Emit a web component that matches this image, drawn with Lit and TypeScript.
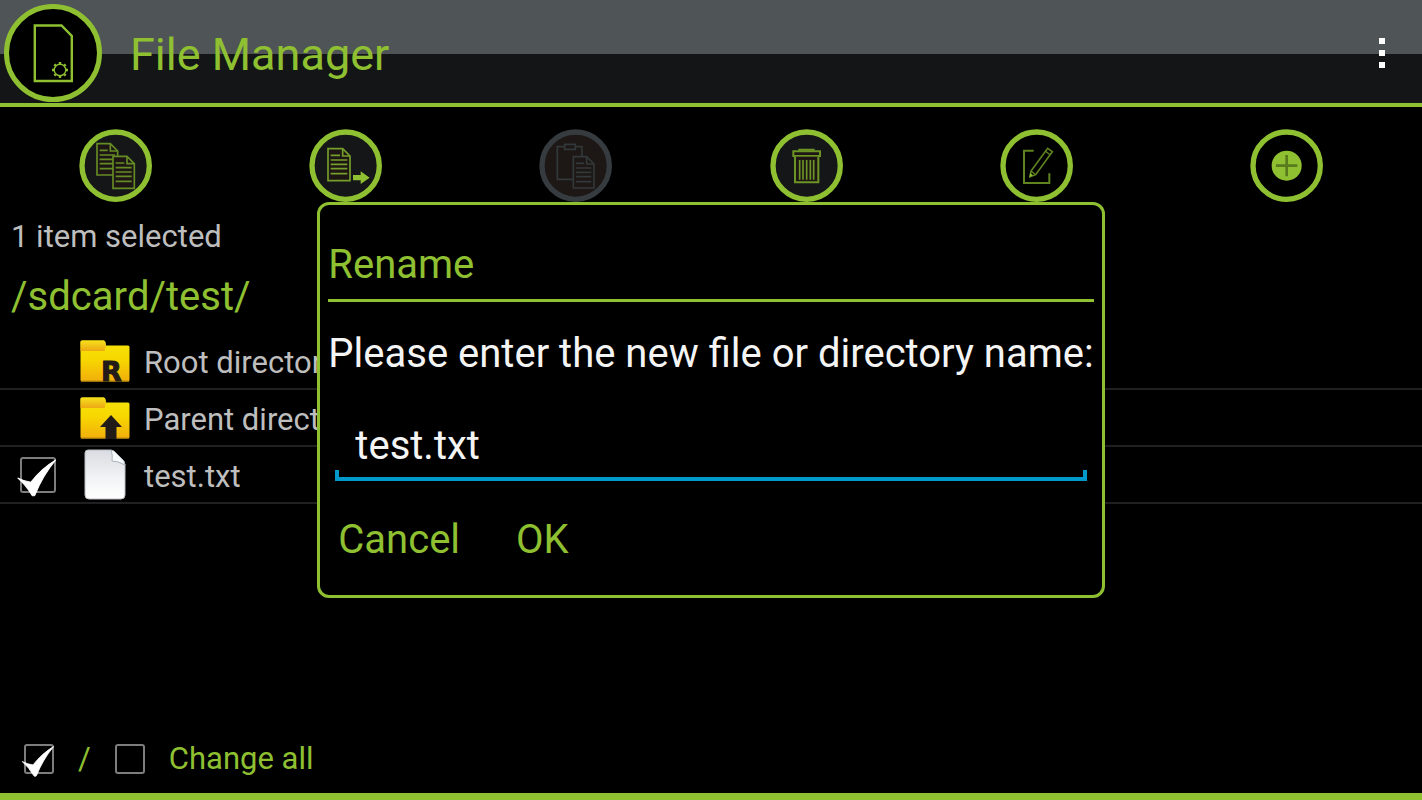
import { LitElement, html, svg, css, nothing, TemplateResult } from "lit";
import { customElement, state } from "lit/decorators.js";

const folder = (mark: TemplateResult) => html`
  <svg class="icon" width="50" height="42" viewBox="0 0 50 42" aria-hidden="true">
    <defs>
      <linearGradient id="body" x1="0" y1="0" x2="0" y2="1">
        <stop offset="0" stop-color="#f6e30a" />
        <stop offset="0.45" stop-color="#f7d800" />
        <stop offset="1" stop-color="#f2ae0c" />
      </linearGradient>
      <linearGradient id="tab" x1="0" y1="0" x2="0" y2="1">
        <stop offset="0" stop-color="#f6e01c" />
        <stop offset="1" stop-color="#eea814" />
      </linearGradient>
    </defs>
    <path d="M0.5 2Q0.5 0.5 2 0.5H23.5Q25 0.5 25.3 2L26 5.5H48Q49.5 5.5 49.5 7V40Q49.5 41.5 48 41.5H2Q0.5 41.5 0.5 40Z" fill="url(#body)" />
    <path d="M0.5 2Q0.5 0.5 2 0.5H23.5Q25 0.5 25.3 2L26 5.5L24.5 11H0.5Z" fill="url(#tab)" />
    <path d="M1 41H49" stroke="#b98a10" stroke-width="1" />
    ${mark}
  </svg>
`;

const rootFolder = () =>
  folder(svg`<text x="21" y="41" font-family="DejaVu Sans, sans-serif" font-weight="bold" font-size="27" fill="#231b18" stroke="#231b18" stroke-width="1">R</text>`);

const parentFolder = () => folder(svg`<path d="M31 18L42 30H36.5V42H25.5V30H20Z" fill="#231b18" />`);

const fileIcon = () => html`
  <svg class="icon" width="42" height="51" viewBox="0 0 42 51" aria-hidden="true">
    <defs>
      <linearGradient id="paper" x1="0" y1="0" x2="0" y2="1">
        <stop offset="0" stop-color="#d9dce1" />
        <stop offset="0.6" stop-color="#f3f4f6" />
        <stop offset="1" stop-color="#ffffff" />
      </linearGradient>
    </defs>
    <path d="M4 1H27L41 15V46Q41 50 37 50H5Q1 50 1 46V4Q1 1 4 1Z" fill="url(#paper)" stroke="#b9bdc2" stroke-width="1" />
    <path d="M27 1Q29 6 28 12Q34 12 41 16L40 12L30 2Z" fill="#f7f9fa" stroke="#a9b3bc" stroke-width="1" />
  </svg>
`;

const sheet = (x: number, y: number, w: number, h: number, paper: string) => svg`
  <g transform="translate(${x} ${y})">
    <path d="M0 0H${w - 22}L${w} 22V${h}H0Z" fill=${paper} />
    <path d="M${w - 22} 0V22H${w}" />
    <path d="M8 20H${w - 30}M8 34H${w - 8}M8 47H${w - 8}M8 60H${w - 8}M8 75H${w - 8}" />
  </g>
`;

interface Action {
  name: string;
  ring: string;
  face: string;
  ink: string;
  disabled?: boolean;
  art: TemplateResult;
}

const GREEN = "#8fc031";

const actions: Action[] = [
  {
    name: "Copy", ring: GREEN, face: "#141618", ink: "#658c24",
    art: svg`${sheet(81, 71, 62, 94, "#1e1614")}${sheet(129, 109, 64, 96, "#1e1614")}`,
  },
  {
    name: "Move", ring: GREEN, face: "#141618", ink: "#759e2a",
    art: svg`${sheet(84, 86, 66, 96, "#1e1614")}<path d="M159 165H182V154L209 173L182 192V181H159Z" fill="#8fc031" stroke="none" />`,
  },
  {
    name: "Paste", ring: "#353b3f", face: "#1d1715", ink: "#33383a", disabled: true,
    art: svg`<path d="M104 80H82V178H130M135 80H156V108" /><path d="M104 73H136V88H104Z" />${sheet(130, 110, 62, 94, "#1d1715")}`,
  },
  {
    name: "Delete", ring: GREEN, face: "#141618", ink: "#6d9526",
    art: svg`
      <g stroke-width="6">
        <path d="M97 94H177V108H97Z" fill="#1e1614" />
        <path d="M115 92V89H158V92" />
        <path d="M102 110V187H172V110" fill="#1e1614" />
        <path d="M116 120V179M126 120V179M137 120V179M148 120V179M158 120V179" stroke-width="5" />
      </g>`,
  },
  {
    name: "Rename", ring: GREEN, face: "#000000", ink: "#5f8420",
    art: svg`
      <g stroke-width="6">
        <path d="M128 92H99V189H175V160" />
        <path d="M170 85L184 95L134 164L117 170L120 153Z" stroke-width="5" />
        <path d="M120 153L134 164M163 93L177 104" stroke-width="4" />
        <path d="M118 160L126 166L115 171Z" fill="#8fc031" stroke="none" />
      </g>`,
  },
  {
    name: "Add", ring: GREEN, face: "#000000", ink: "#587b1e",
    art: svg`<circle cx="137" cy="137" r="45" fill="#8fc031" stroke="none" /><path d="M105 137H169M137 105V169" stroke-width="8" />`,
  },
];

@customElement("tick-box")
export class TickBox extends LitElement {
  static properties = {
    checked: { type: Boolean },
    label: { type: String },
  };
  declare checked: boolean;
  declare label: string;

  constructor() {
    super();
    this.checked = false;
    this.label = "";
  }

  static styles = css`
    :host { display: block; }
    .wrap { display: grid; width: var(--box, 30px); height: var(--box, 30px); }
    .box {
      grid-area: 1 / 1;
      appearance: none;
      box-sizing: border-box;
      width: 100%;
      height: 100%;
      margin: 0;
      border: 2px solid #7d7d7d;
      border-radius: 3px;
      background: #000;
    }
    .tick { grid-area: 1 / 1; width: 100%; height: 100%; overflow: visible; pointer-events: none; }
    .box:not(:checked) + .tick { display: none; }
  `;

  render() {
    return html`
      <label class="wrap">
        <input
          class="box"
          type="checkbox"
          aria-label=${this.label}
          .checked=${this.checked}
          @change=${(e: Event) => (this.checked = (e.target as HTMLInputElement).checked)}
        />
        <svg class="tick" viewBox="0 0 35 35" aria-hidden="true">
          <path d="M-2 20.5Q4 23.5 10.5 24.5Q21 11 34.5 3Q22 18 14.5 37Q13 38.5 11.5 37Q6 27.5 -2 20.5Z" fill="#ffffff" stroke="#ffffff" stroke-width="1" stroke-linejoin="round" />
        </svg>
      </label>
    `;
  }
}

@customElement("app-root")
export class AppRoot extends LitElement {
  @state() private fileName = "test.txt";
  @state() private dialogOpen = true;

  static styles = css`
    :host {
      --green: #8fc031;
      display: block;
      font-family: Roboto, "Noto Sans", sans-serif;
      color: #bebebe;
    }
    button { font: inherit; color: inherit; background: none; border: 0; padding: 0; margin: 0; cursor: pointer; }
    .page {
      box-sizing: border-box;
      min-height: 100vh;
      display: flex;
      flex-direction: column;
      background: #000;
      border-bottom: 7px solid var(--green);
    }
    .header {
      display: flex;
      align-items: center;
      gap: 28px;
      padding: 4px 24px 1px 4px;
      border-bottom: 4px solid var(--green);
      background: linear-gradient(#4f5457 54px, #141517 54px);
    }
    .logo { display: block; flex: none; }
    .title { flex: 1; margin: 0; padding-top: 4px; font-size: 45px; line-height: 56px; font-weight: 400; color: var(--green); }
    .menu { display: flex; flex-direction: column; align-items: center; gap: 6px; width: 32px; }
    .dot { width: 6px; height: 6px; background: #fff; }

    .toolbar { display: grid; grid-template-columns: repeat(5, 1fr) 270px; justify-items: center; padding: 22px 0 15px; }
    .action { display: block; border-radius: 50%; }
    .action:disabled { cursor: default; }
    .glyph { display: block; }

    .status { padding-left: 11px; font-size: 31px; line-height: 40px; }
    .path { margin: 0; padding: 16px 11px 12px; font-size: 40px; line-height: 48px; font-weight: 400; font-kerning: none; color: var(--green); }

    .list { list-style: none; margin: 0; padding: 0; }
    .row {
      box-sizing: border-box;
      display: grid;
      grid-template-columns: 60px 50px 1fr;
      align-items: center;
      height: 57px;
      padding-left: 20px;
      border-bottom: 2px solid #202020;
    }
    .select { --box: 36px; }
    .icon { display: block; justify-self: center; overflow: visible; }
    .name { padding: 4px 0 0 14px; text-align: left; font-size: 31px; line-height: 40px; }

    .footer {
      display: flex;
      align-items: center;
      margin-top: auto;
      padding: 13px 24px;
      font-size: 31px;
      line-height: 42px;
      color: var(--green);
    }
    .slash { padding: 0 24px; }
    .change { padding-left: 24px; }

    .overlay { position: fixed; inset: 0; display: grid; place-content: center; }
    .dialog {
      box-sizing: border-box;
      padding: 36px 8px 31px;
      border: 3px solid var(--green);
      border-radius: 12px;
      background: #000;
      font-size: 40px;
      line-height: 48px;
      color: #f4f4f4;
    }
    .heading { margin: 0; padding-bottom: 10px; border-bottom: 3px solid var(--green); font-size: inherit; font-weight: 400; color: var(--green); }
    .field { display: flex; flex-direction: column; gap: 43px; padding-top: 28px; }
    .input {
      box-sizing: border-box;
      height: 60px;
      margin: 0 7px;
      padding: 0 20px 11px;
      border: 0;
      outline: 0;
      border-radius: 0;
      font: inherit;
      color: inherit;
      background:
        linear-gradient(#0099cc, #0099cc) left bottom / 100% 4px no-repeat,
        linear-gradient(#0099cc, #0099cc) left bottom / 4px 11px no-repeat,
        linear-gradient(#0099cc, #0099cc) right bottom / 4px 11px no-repeat;
    }
    .choices { display: flex; gap: 56px; padding: 35px 10px 0; color: var(--green); }
  `;

  private close() {
    this.dialogOpen = false;
  }

  private renderAction(a: Action) {
    return html`
      <button class="action" aria-label=${a.name} ?disabled=${a.disabled}>
        <svg class="glyph" width="73" height="73" viewBox="27 27 219 219" aria-hidden="true">
          <circle cx="137" cy="137" r="101" fill=${a.face} stroke=${a.ring} stroke-width="16" />
          <g fill="none" stroke=${a.ink} stroke-width="5">${a.art}</g>
        </svg>
      </button>
    `;
  }

  private renderDialog() {
    return html`
      <div class="overlay">
        <section class="dialog" role="dialog" aria-labelledby="heading">
          <h2 class="heading" id="heading">Rename</h2>
          <div class="field">
            <label for="name">Please enter the new file or directory name:</label>
            <input
              class="input"
              id="name"
              type="text"
              spellcheck="false"
              .value=${this.fileName}
              @input=${(e: Event) => (this.fileName = (e.target as HTMLInputElement).value)}
            />
          </div>
          <div class="choices">
            <button @click=${this.close}>Cancel</button>
            <button @click=${this.close}>OK</button>
          </div>
        </section>
      </div>
    `;
  }

  render() {
    const teeth = [0, 45, 90, 135, 180, 225, 270, 315];
    return html`
      <div class="page">
        <header class="header">
          <svg class="logo" width="98" height="98" viewBox="4 4 98 98" aria-hidden="true">
            <circle cx="53" cy="53" r="46.5" fill="#000" stroke="#8fc031" stroke-width="5" />
            <g fill="none" stroke="#8fc031" stroke-width="2.4">
              <path d="M34.8 25.5H61.5L71.8 36V81H34.8Z" />
              <circle cx="60" cy="70" r="5.8" stroke-width="1.4" />
              ${teeth.map((t) => svg`<path d="M60 64V62" transform="rotate(${t} 60 70)" />`)}
            </g>
          </svg>
          <h1 class="title">File Manager</h1>
          <button class="menu" aria-label="More options">
            <span class="dot"></span><span class="dot"></span><span class="dot"></span>
          </button>
        </header>

        <nav class="toolbar">${actions.map((a) => this.renderAction(a))}</nav>

        <main>
          <div class="status">1 item selected</div>
          <h2 class="path">/sdcard/test/</h2>
          <ul class="list">
            <li class="row"><span></span>${rootFolder()}<button class="name">Root directory</button></li>
            <li class="row"><span></span>${parentFolder()}<button class="name">Parent directory</button></li>
            <li class="row">
              <tick-box class="select" label="Select test.txt" checked></tick-box>
              ${fileIcon()}<button class="name">test.txt</button>
            </li>
          </ul>
        </main>

        <footer class="footer">
          <tick-box label="Select all" checked></tick-box>
          <span class="slash">/</span>
          <tick-box label="Select none"></tick-box>
          <span class="change">Change all</span>
        </footer>
      </div>
      ${this.dialogOpen ? this.renderDialog() : nothing}
    `;
  }
}
